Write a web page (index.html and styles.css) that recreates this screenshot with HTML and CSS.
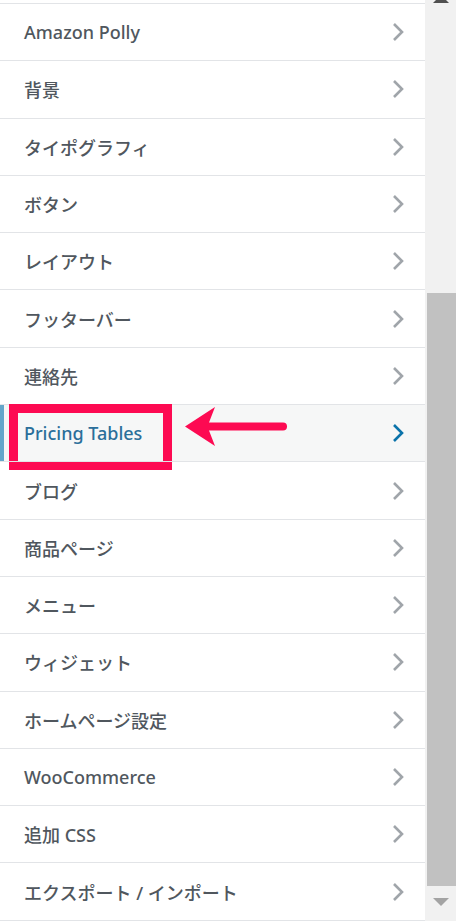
FILE: index.html
```html
<!DOCTYPE html>
<html lang="ja">
<head>
    <meta charset="UTF-8">
    <meta name="viewport" content="width=device-width, initial-scale=1.0">
    <title>カスタマイズ</title>
    <link rel="stylesheet" href="styles.css">
</head>
<body>
    <div class="page">
        <ul class="menu">
            <li class="row"><span>Amazon Polly</span><svg class="chev" viewBox="0 0 12 20"><polyline points="2,2 10,10 2,18"/></svg></li>
            <li class="row"><span>背景</span><svg class="chev" viewBox="0 0 12 20"><polyline points="2,2 10,10 2,18"/></svg></li>
            <li class="row"><span>タイポグラフィ</span><svg class="chev" viewBox="0 0 12 20"><polyline points="2,2 10,10 2,18"/></svg></li>
            <li class="row"><span>ボタン</span><svg class="chev" viewBox="0 0 12 20"><polyline points="2,2 10,10 2,18"/></svg></li>
            <li class="row"><span>レイアウト</span><svg class="chev" viewBox="0 0 12 20"><polyline points="2,2 10,10 2,18"/></svg></li>
            <li class="row"><span>フッターバー</span><svg class="chev" viewBox="0 0 12 20"><polyline points="2,2 10,10 2,18"/></svg></li>
            <li class="row"><span>連絡先</span><svg class="chev" viewBox="0 0 12 20"><polyline points="2,2 10,10 2,18"/></svg></li>
            <li class="row active">
                <span>Pricing Tables</span><svg class="chev" viewBox="0 0 12 20"><polyline points="2,2 10,10 2,18"/></svg>
                <div class="mark"></div>
                <svg class="pointer" viewBox="0 0 106 46">
                    <line x1="24" y1="22.5" x2="100" y2="22.5"/>
                    <polygon points="2,22.5 32,3 26,18.5 26,26.5 32,42"/>
                </svg>
            </li>
            <li class="row"><span>ブログ</span><svg class="chev" viewBox="0 0 12 20"><polyline points="2,2 10,10 2,18"/></svg></li>
            <li class="row"><span>商品ページ</span><svg class="chev" viewBox="0 0 12 20"><polyline points="2,2 10,10 2,18"/></svg></li>
            <li class="row"><span>メニュー</span><svg class="chev" viewBox="0 0 12 20"><polyline points="2,2 10,10 2,18"/></svg></li>
            <li class="row"><span>ウィジェット</span><svg class="chev" viewBox="0 0 12 20"><polyline points="2,2 10,10 2,18"/></svg></li>
            <li class="row"><span>ホームページ設定</span><svg class="chev" viewBox="0 0 12 20"><polyline points="2,2 10,10 2,18"/></svg></li>
            <li class="row"><span>WooCommerce</span><svg class="chev" viewBox="0 0 12 20"><polyline points="2,2 10,10 2,18"/></svg></li>
            <li class="row"><span>追加 CSS</span><svg class="chev" viewBox="0 0 12 20"><polyline points="2,2 10,10 2,18"/></svg></li>
            <li class="row"><span>エクスポート / インポート</span><svg class="chev" viewBox="0 0 12 20"><polyline points="2,2 10,10 2,18"/></svg></li>
        </ul>
        <div class="scrollbar">
            <div class="arrow-up"></div>
            <div class="thumb"></div>
            <div class="arrow-down"></div>
        </div>
    </div>
</body>
</html>
```
FILE: styles.css
```css
html, body {
    margin: 0;
    padding: 0;
    height: 921px;
    overflow: hidden;
    background: #ffffff;
}
body {
    font-family: "Noto Sans", "Noto Sans CJK JP", sans-serif;
    color: #50575e;
}
.page {
    display: flex;
    height: 921px;
}
.menu {
    list-style: none;
    margin: 0;
    padding: 3px 0 0;
    width: 425px;
    flex-shrink: 0;
}
.row {
    position: relative;
    display: flex;
    align-items: center;
    justify-content: space-between;
    height: 56.3px;
    padding: 0 21px 0 24px;
    border-top: 1px solid #e2e4e7;
    font-size: 18px;
    font-weight: 500;
}
.row:last-child {
    border-bottom: 1px solid #e2e4e7;
}
.chev {
    width: 12px;
    height: 20px;
    fill: none;
    stroke: #a0a5aa;
    stroke-width: 2.6;
}
.active {
    background: #f6f7f7;
    color: #2b6f9a;
}
.active::before {
    content: "";
    position: absolute;
    left: 0;
    top: 0;
    bottom: 0;
    width: 4px;
    background: #64a6ca;
}
.active .chev {
    stroke: #0a73aa;
}
.mark {
    position: absolute;
    left: 9px;
    top: -1px;
    width: 145px;
    height: 48px;
    border: 9px solid #fd0a52;
}
.pointer {
    position: absolute;
    left: 183px;
    top: -1px;
    width: 106px;
    height: 46px;
    fill: #fd0a52;
    stroke: #fd0a52;
}
.pointer line {
    stroke-width: 8;
    stroke-linecap: round;
}
.pointer polygon {
    stroke: none;
}
.scrollbar {
    position: relative;
    flex: 1;
    background: #f1f1f1;
    display: flex;
    flex-direction: column;
    align-items: center;
}
.arrow-up {
    width: 0;
    height: 0;
    margin-top: -5px;
    border-left: 8px solid transparent;
    border-right: 8px solid transparent;
    border-bottom: 8px solid #505050;
}
.thumb {
    align-self: stretch;
    margin: 290px 0 0 2px;
    height: 593px;
    background: #c1c1c1;
}
.arrow-down {
    width: 0;
    height: 0;
    margin-top: 12px;
    border-left: 8px solid transparent;
    border-right: 8px solid transparent;
    border-top: 8px solid #a3a3a3;
}
```
